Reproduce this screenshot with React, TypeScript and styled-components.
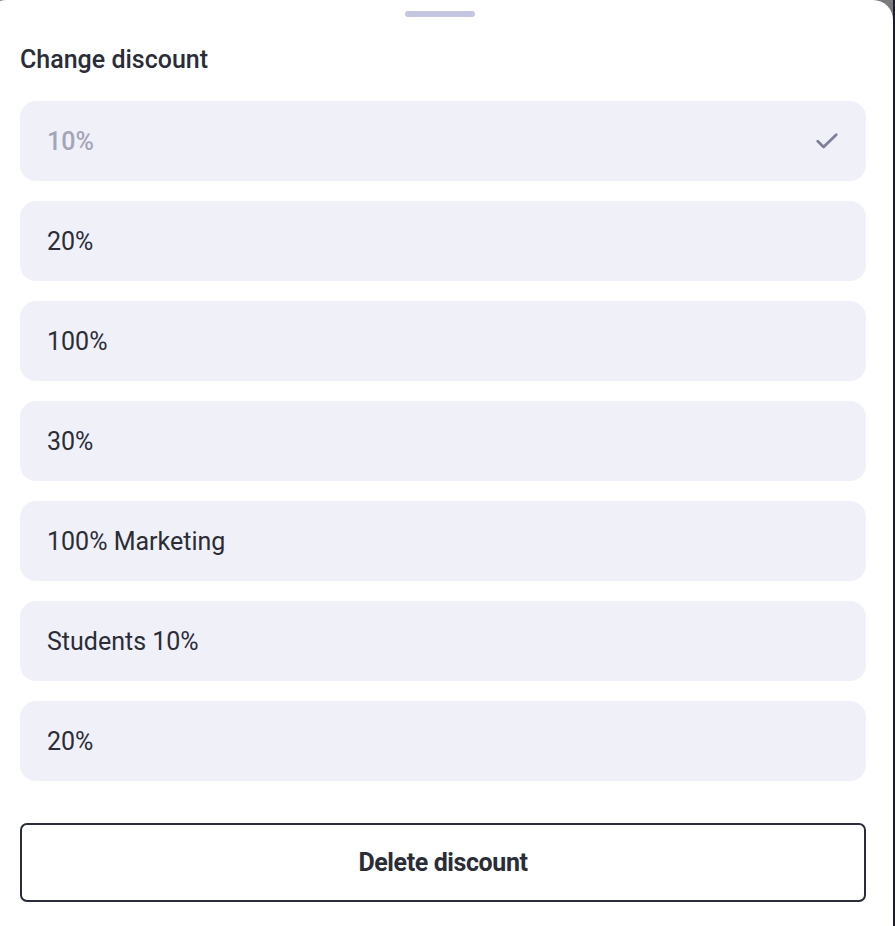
import React from "react";
import styled, { createGlobalStyle } from "styled-components";

const Global = createGlobalStyle`
  html, body { margin: 0; padding: 0; background: #1c1e2b; }
  body { font-family: Roboto, "Noto Sans", sans-serif; -webkit-font-smoothing: antialiased; }
  * { box-sizing: border-box; }
`;

const Backdrop = styled.div`
  width: 893px;
  height: 926px;
  background: #7b7b7d;
  overflow: hidden;
`;

const Sheet = styled.div`
  margin-left: -14px;
  width: 907px;
  height: 926px;
  background: #ffffff;
  border-radius: 20px 20px 0 0;
  padding: 11px 27px 0 34px;
  display: flex;
  flex-direction: column;
`;

const Handle = styled.div`
  align-self: center;
  margin-left: -7px;
  width: 70px;
  height: 6px;
  border-radius: 3px;
  background: #c4c6e1;
`;

const Title = styled.h2`
  margin: 28px 0 0;
  font-size: 25px;
  line-height: 30px;
  font-weight: 500;
  color: #2a2d37;
`;

const List = styled.div`
  margin-top: 26px;
  display: flex;
  flex-direction: column;
  gap: 20px;
`;

const Item = styled.div<{ $selected?: boolean }>`
  height: 80px;
  border-radius: 16px;
  background: #f0f0f9;
  display: flex;
  align-items: center;
  justify-content: space-between;
  padding: 0 27px;
  font-size: 25px;
  font-weight: ${(p) => (p.$selected ? 500 : 400)};
  color: ${(p) => (p.$selected ? "#a3a5b7" : "#2a2d37")};
`;

const Check = styled.svg`
  width: 22px;
  height: 16px;
  margin-right: 1px;
`;

const DeleteButton = styled.button`
  margin-top: 42px;
  height: 79px;
  border: 2px solid #2a2d37;
  border-radius: 7px;
  background: #ffffff;
  font-family: Roboto, "Noto Sans", sans-serif;
  font-size: 25px;
  font-weight: 700;
  color: #2a2d37;
  letter-spacing: -0.4px;
  cursor: pointer;
`;

const items = ["10%", "20%", "100%", "30%", "100% Marketing", "Students 10%", "20%"];

export default function App() {
  return (
    <>
      <Global />
      <Backdrop>
        <Sheet>
          <Handle />
          <Title>Change discount</Title>
          <List>
            {items.map((t, i) => (
              <Item key={i} $selected={i === 0}>
                <span>{t}</span>
                {i === 0 && (
                  <Check viewBox="0 0 22 16" fill="none" stroke="#7d8099" strokeWidth="2.8" strokeLinecap="round" strokeLinejoin="round">
                    <path d="M1.8 8.2L7.6 14L20.2 1.8" />
                  </Check>
                )}
              </Item>
            ))}
          </List>
          <DeleteButton>Delete discount</DeleteButton>
        </Sheet>
      </Backdrop>
    </>
  );
}
